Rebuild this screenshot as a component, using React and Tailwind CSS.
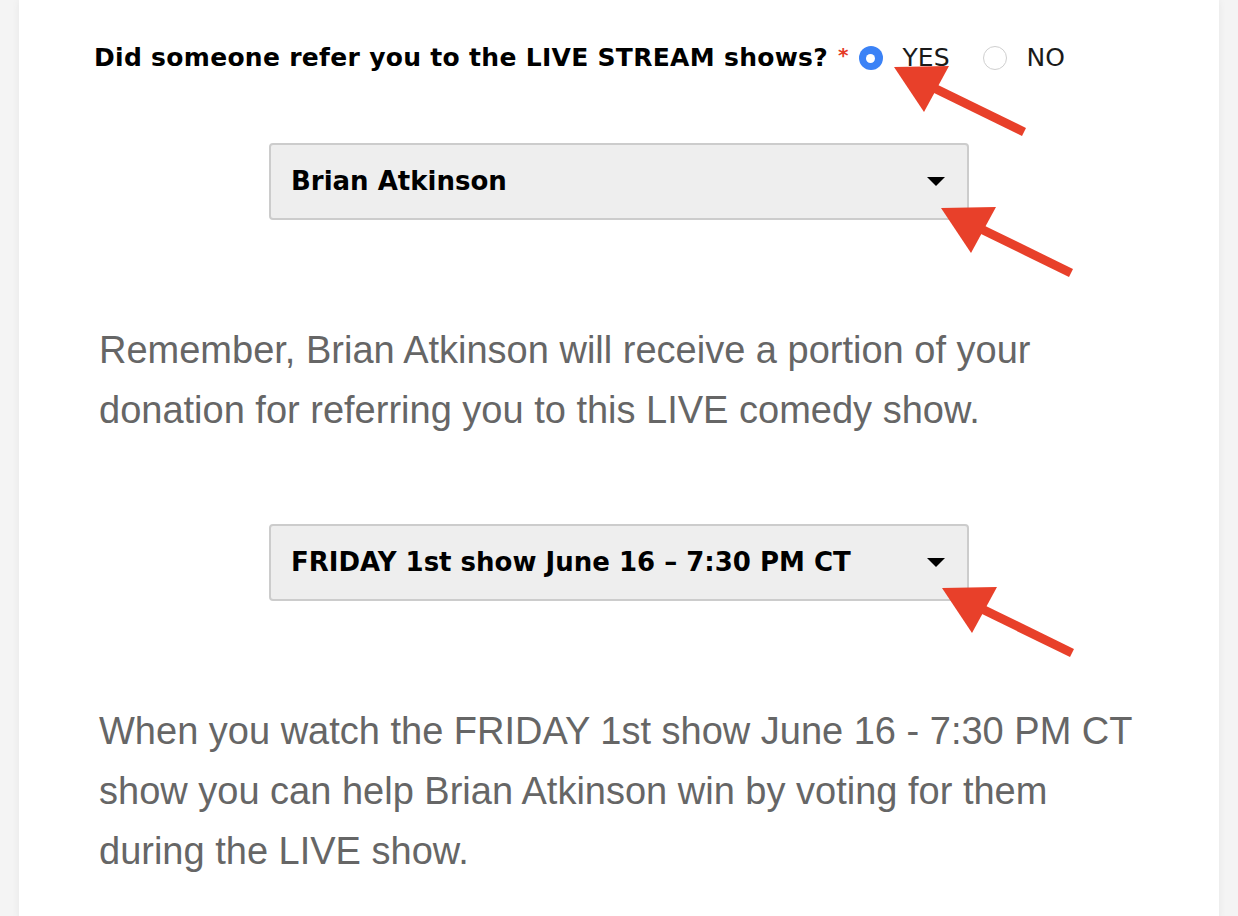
import { useState } from "react";

const label = { fontFamily: '"DejaVu Sans", Verdana, sans-serif' };
const body = { fontFamily: '"Liberation Sans", Arial, sans-serif' };

function Caret() {
  return (
    <svg width="18" height="9" viewBox="0 0 18 9" className="shrink-0">
      <path d="M0 0h18L9 9z" fill="#000" />
    </svg>
  );
}

function Select({ value }) {
  return (
    <div className="mx-auto w-[700px] h-[77px] bg-[#eeeeee] border-2 border-[#cccccc] rounded-[4px] flex items-center justify-between pl-[20px] pr-[22px]">
      <span className="text-[26px] font-bold text-black" style={label}>
        {value}
      </span>
      <Caret />
    </div>
  );
}

function Arrow({ className }) {
  return (
    <svg
      className={`absolute pointer-events-none ${className}`}
      width="140"
      height="80"
      viewBox="0 0 140 80"
    >
      <path d="M130 72 L40 28" stroke="#e8402a" strokeWidth="9" fill="none" />
      <path d="M0 7 L55 6 L30 52 Z" fill="#e8402a" />
    </svg>
  );
}

function Radio({ checked, onClick, children, className }) {
  return (
    <label className={`flex items-center cursor-pointer ${className}`} onClick={onClick}>
      <span
        className={`w-[24px] h-[24px] rounded-full flex items-center justify-center ${
          checked ? "bg-[#3b82f6]" : "bg-white border border-[#cfcfcf]"
        }`}
      >
        {checked && <span className="w-[9px] h-[9px] rounded-full bg-white" />}
      </span>
      <span className="text-[25px] text-[#1a1a1a] ml-[20px]">{children}</span>
    </label>
  );
}

export default function App() {
  const [ref, setRef] = useState("yes");

  return (
    <div className="min-h-[916px] bg-[#f4f4f4] flex justify-center">
      <div className="relative w-[1200px] bg-white shadow-[0_0_8px_rgba(0,0,0,0.06)] pl-[80px] pr-[60px] pt-[40px] pb-[40px]">
        <div className="flex items-center h-[36px] -ml-[5px]" style={label}>
          <span className="text-[25px] font-bold text-black tracking-[0.3px]">
            Did someone refer you to the LIVE STREAM shows?
          </span>
          <span className="text-[#e53a26] text-[20px] font-bold ml-[10px] -mt-[6px]">*</span>
          <Radio checked={ref === "yes"} onClick={() => setRef("yes")} className="ml-[10px]">
            YES
          </Radio>
          <Radio checked={ref === "no"} onClick={() => setRef("no")} className="ml-[33px]">
            NO
          </Radio>
        </div>

        <div className="mt-[67px] -ml-[20px]">
          <Select value="Brian Atkinson" />
        </div>

        <p className="mt-[100px] text-[38px] leading-[60px] text-[#666666]" style={body}>
          Remember, Brian Atkinson will receive a portion of your
          <br />
          donation for referring you to this LIVE comedy show.
        </p>

        <div className="mt-[84px] -ml-[20px]">
          <Select value="FRIDAY 1st show June 16 – 7:30 PM CT" />
        </div>

        <p className="mt-[100px] text-[38px] leading-[60px] text-[#666666]" style={body}>
          When you watch the FRIDAY 1st show June 16 - 7:30 PM CT
          <br />
          show you can help Brian Atkinson win by voting for them
          <br />
          during the LIVE show.
        </p>

        <Arrow className="left-[875px] top-[60px]" />
        <Arrow className="left-[922px] top-[201px]" />
        <Arrow className="left-[923px] top-[581px]" />
      </div>
    </div>
  );
}
